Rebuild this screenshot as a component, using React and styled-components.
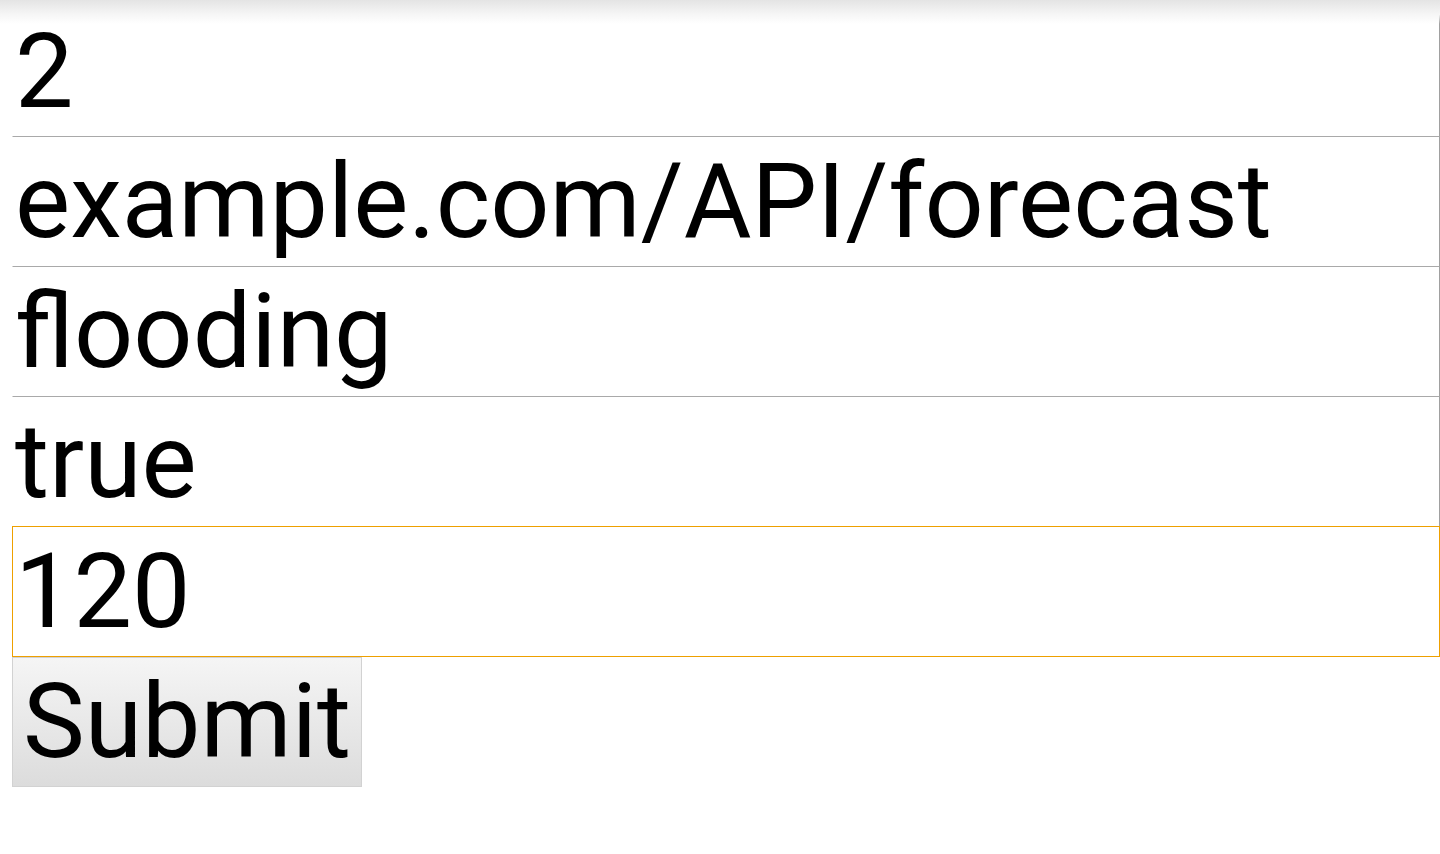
import React from "react";
import styled, { createGlobalStyle } from "styled-components";

const GlobalStyle = createGlobalStyle`
  html, body {
    margin: 0;
    background: #ffffff;
    overflow: hidden;
  }
`;

const Page = styled.div`
  position: relative;
  width: 1440px;
  height: 854px;
  padding: 7px 0 0 12px;
  box-sizing: border-box;
  font-family: Roboto, "Liberation Sans", sans-serif;
`;

const TopShade = styled.div`
  position: absolute;
  top: 0;
  left: 0;
  right: 0;
  height: 24px;
  background: linear-gradient(to bottom, #e4e4e4 0%, #f6f6f6 60%, rgba(255, 255, 255, 0) 100%);
  pointer-events: none;
  z-index: 2;
`;

const Form = styled.form`
  display: flex;
  flex-direction: column;
  align-items: flex-start;
`;

const Field = styled.input`
  display: block;
  width: 1428px;
  height: ${({ $focused }) => ($focused ? "131px" : "130px")};
  margin: ${({ $focused }) => ($focused ? "-1px 0 0 0" : "0")};
  padding: 0 2px;
  box-sizing: border-box;
  border: 1px solid ${({ $focused }) => ($focused ? "#eea000" : "transparent")};
  border-bottom-color: ${({ $focused }) => ($focused ? "#eea000" : "#a9a9a9")};
  border-right-color: ${({ $focused }) => ($focused ? "#eea000" : "#a0a0a0")};
  border-top-width: ${({ $focused }) => ($focused ? "1px" : "0")};
  border-radius: 0;
  outline: none;
  background: #ffffff;
  color: #000000;
  font-family: inherit;
  font-size: 104px;
  line-height: 1;
  position: relative;
  z-index: 1;
`;

const SubmitButton = styled.button`
  height: 130px;
  padding: 0 10px;
  border: 1px solid #d2d2d2;
  border-radius: 0;
  background: linear-gradient(to bottom, #f5f5f5 0%, #dcdcdc 100%);
  color: #000000;
  font-family: inherit;
  font-size: 104px;
  line-height: 1;
`;

const fields = [
  { name: "id", value: "2" },
  { name: "url", value: "example.com/API/forecast" },
  { name: "event", value: "flooding" },
  { name: "active", value: "true" },
  { name: "interval", value: "120", focused: true },
];

const App = () => (
  <>
    <GlobalStyle />
    <Page>
      <TopShade />
      <Form onSubmit={(e) => e.preventDefault()}>
        {fields.map(({ name, value, focused }) => (
          <Field
            key={name}
            name={name}
            defaultValue={value}
            $focused={focused}
          />
        ))}
        <SubmitButton type="submit">Submit</SubmitButton>
      </Form>
    </Page>
  </>
);

export default App;
